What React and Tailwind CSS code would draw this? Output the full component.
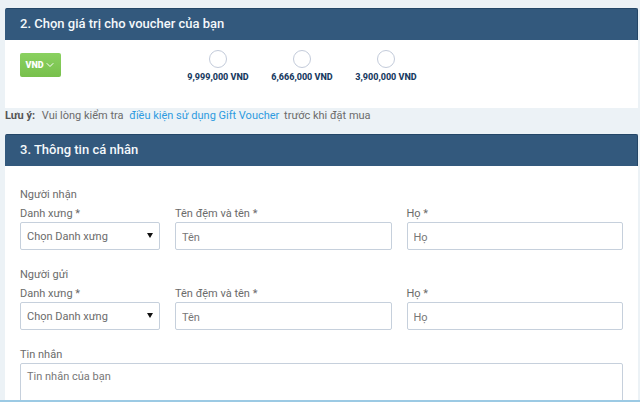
import { ChevronDown } from 'lucide-react'

const amounts = ['9,999,000 VND', '6,666,000 VND', '3,900,000 VND']

const people = [
  { id: 'recipient', title: 'Người nhận' },
  { id: 'sender', title: 'Người gửi' },
]

function Section({ title, children }) {
  return (
    <section className="bg-white">
      <h2 className="h-8 rounded-t-xs border-t border-r border-[#234667] bg-[#33597d] px-[15px] text-[13px] leading-[30px] font-medium text-[#f4f8fb]">
        {title}
      </h2>
      {children}
    </section>
  )
}

function TextField({ id, label, placeholder }) {
  return (
    <div>
      <label htmlFor={id} className="block h-[17px]">{label} *</label>
      <input
        id={id}
        type="text"
        placeholder={placeholder}
        className="block h-7 w-full rounded-xs border border-[#c6d0dc] bg-white px-1.5 pt-0.5 placeholder:text-[#777]"
      />
    </div>
  )
}

function PersonFields({ person }) {
  return (
    <fieldset className="mb-4">
      <legend className="h-[19px]">{person.title}</legend>
      <div className="grid grid-cols-[140px_1fr_1fr] gap-[15px]">
        <div>
          <label htmlFor={`${person.id}-title`} className="block h-[17px]">Danh xưng *</label>
          <div className="relative">
            <select
              id={`${person.id}-title`}
              className="block h-7 w-full appearance-none rounded-xs border border-[#c6d0dc] bg-white px-1.5 pt-0.5"
            >
              <option>Chọn Danh xưng</option>
            </select>
            <svg viewBox="0 0 6 5" className="pointer-events-none absolute top-[11px] right-[7px] h-[5px] w-1.5">
              <path d="M0 0h6L3 5z" fill="#111" />
            </svg>
          </div>
        </div>
        <TextField id={`${person.id}-first`} label="Tên đệm và tên" placeholder="Tên" />
        <TextField id={`${person.id}-last`} label="Họ" placeholder="Họ" />
      </div>
    </fieldset>
  )
}

function App() {
  return (
    <div className="h-screen overflow-hidden border-b-2 border-[#9ccae4] bg-[#ecf2f6] pt-2 pr-0.5 pl-[5px] font-['Roboto',sans-serif] text-[11px] leading-[18px] text-[#6b6b6b]">
      <Section title="2. Chọn giá trị cho voucher của bạn">
        <div className="flex h-[68px] px-[15px] pt-2.5">
          <div className="w-[156px]">
            <button
              type="button"
              className="mt-[3px] flex h-6 w-[41px] items-center justify-center rounded-xs bg-linear-to-b from-[#8ad160] to-[#78c04c] text-[9px] font-black text-white"
            >
              VND
              <ChevronDown className="size-3" />
            </button>
          </div>
          {amounts.map((amount) => (
            <label
              key={amount}
              className="flex w-[84px] flex-col items-center text-[9px] leading-[18px] font-extrabold whitespace-nowrap text-[#173a61]"
            >
              <input
                type="radio"
                name="amount"
                className="size-[18px] appearance-none rounded-full border border-[#c3cbda] bg-white checked:border-[5px] checked:border-[#33597d]"
              />
              {amount}
            </label>
          ))}
        </div>
      </Section>

      <p className="h-[26px] leading-4">
        <strong className="mr-1 text-[#555]">Lưu ý:</strong> Vui lòng kiểm tra{' '}
        <a href="#terms" className="mr-0.5 ml-[3px] text-[#2e9be0]">điều kiện sử dụng Gift Voucher</a>{' '}
        trước khi đặt mua
      </p>

      <Section title="3. Thông tin cá nhân">
        <form className="px-[15px] pt-5">
          {people.map((person) => (
            <PersonFields key={person.id} person={person} />
          ))}
          <label htmlFor="message" className="block h-[17px]">Tin nhắn</label>
          <textarea
            id="message"
            rows={4}
            placeholder="Tin nhắn của bạn"
            className="block w-full resize-none rounded-xs border border-[#c6d0dc] bg-white px-1.5 py-1 placeholder:text-[#777]"
          />
        </form>
      </Section>
    </div>
  )
}

export default App
